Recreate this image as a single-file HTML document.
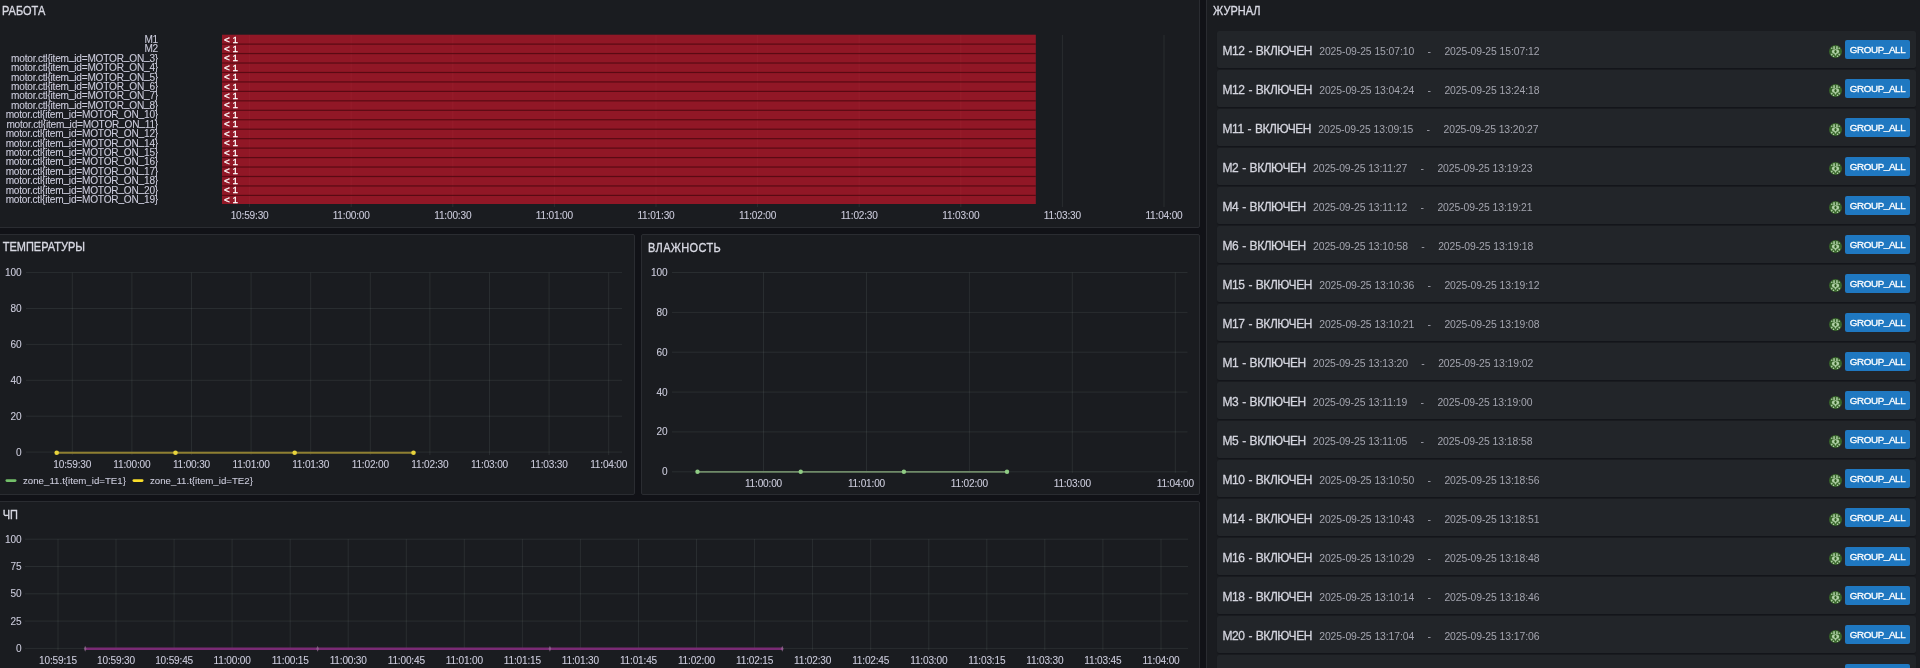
<!DOCTYPE html><html><head><meta charset="utf-8"><style>
html,body{margin:0;padding:0;}
#wrap{position:absolute;left:0;top:0;width:1920px;height:668px;will-change:transform;}
body{width:1920px;height:668px;overflow:hidden;background:#111217;font-family:"Liberation Sans", sans-serif;color:#ccccdc;position:relative;}
.pn{position:absolute;background:#1a1c20;border:1px solid #2a2c31;border-radius:2px;box-sizing:border-box;overflow:hidden;}
.t{position:absolute;white-space:nowrap;line-height:1;}
.ttl{position:absolute;font-size:11px;transform:scaleY(1.1);transform-origin:0 0;-webkit-text-stroke:0.3px #d8d9e3;line-height:1;white-space:nowrap;color:#d8d9e3;}
svg{position:absolute;left:0;top:0;overflow:visible;}
svg text{font-family:"Liberation Sans", sans-serif;fill:#ccccdc;stroke:#ccccdc;stroke-width:0.08px;}
.row{position:absolute;left:1217px;width:699px;height:37px;background:#222529;border-radius:2px;box-shadow:0 1px 1px rgba(5,6,12,0.3);}
.ln{position:absolute;left:5.5px;top:14px;display:flex;align-items:baseline;}
.nm{font-size:12px;letter-spacing:-0.45px;word-spacing:1px;color:#d4d5de;-webkit-text-stroke:0.28px #d4d5de;line-height:1;white-space:nowrap;}
.dt{margin-left:7.3px;font-size:10.4px;letter-spacing:-0.08px;color:#a3a4ae;line-height:1;white-space:nowrap;}
.tag{position:absolute;left:628px;top:9px;width:65px;height:19px;background:#1f78c1;border-radius:2px;color:#fff;font-size:9.8px;letter-spacing:-0.38px;line-height:20.5px;-webkit-text-stroke:0.3px #fff;text-align:center;}
.av{position:absolute;left:611.8px;top:13.7px;width:13px;height:13px;border-radius:50%;background:#37642a;overflow:hidden;}
</style></head><body><div id="wrap">

<div class="pn" style="left:-3px;top:-3px;width:1203px;height:231px"></div>
<div class="pn" style="left:-3px;top:234px;width:638px;height:261px"></div>
<div class="pn" style="left:641px;top:234px;width:559px;height:261px"></div>
<div class="pn" style="left:-3px;top:501px;width:1203px;height:200px"></div>
<div class="pn" style="left:1206px;top:-3px;width:720px;height:704px"></div>
<div class="ttl" style="left:2px;top:4.5px">РАБОТА</div>
<div class="ttl" style="left:2.7px;top:241.3px">ТЕМПЕРАТУРЫ</div>
<div class="ttl" style="left:648px;top:241.6px;letter-spacing:0.35px">ВЛАЖНОСТЬ</div>
<div class="ttl" style="left:2.7px;top:508.5px">ЧП</div>
<div class="ttl" style="left:1213px;top:4.5px">ЖУРНАЛ</div>
<svg width="1920" height="668" viewBox="0 0 1920 668"><line x1="249.6" y1="35" x2="249.6" y2="207" stroke="rgba(190,210,205,0.095)" stroke-width="1"/><line x1="351.2" y1="35" x2="351.2" y2="207" stroke="rgba(190,210,205,0.095)" stroke-width="1"/><line x1="452.8" y1="35" x2="452.8" y2="207" stroke="rgba(190,210,205,0.095)" stroke-width="1"/><line x1="554.4" y1="35" x2="554.4" y2="207" stroke="rgba(190,210,205,0.095)" stroke-width="1"/><line x1="656.0" y1="35" x2="656.0" y2="207" stroke="rgba(190,210,205,0.095)" stroke-width="1"/><line x1="757.6" y1="35" x2="757.6" y2="207" stroke="rgba(190,210,205,0.095)" stroke-width="1"/><line x1="859.2" y1="35" x2="859.2" y2="207" stroke="rgba(190,210,205,0.095)" stroke-width="1"/><line x1="960.8" y1="35" x2="960.8" y2="207" stroke="rgba(190,210,205,0.095)" stroke-width="1"/><line x1="1062.4" y1="35" x2="1062.4" y2="207" stroke="rgba(190,210,205,0.095)" stroke-width="1"/><line x1="1164.0" y1="35" x2="1164.0" y2="207" stroke="rgba(190,210,205,0.095)" stroke-width="1"/><rect x="222" y="34.7" width="813.8" height="169.3" fill="rgba(196,22,42,0.70)"/><rect x="222" y="43.50" width="813.8" height="1.2" fill="rgba(80,8,16,0.85)"/><rect x="222" y="52.96" width="813.8" height="1.2" fill="rgba(80,8,16,0.85)"/><rect x="222" y="62.41" width="813.8" height="1.2" fill="rgba(80,8,16,0.85)"/><rect x="222" y="71.87" width="813.8" height="1.2" fill="rgba(80,8,16,0.85)"/><rect x="222" y="81.33" width="813.8" height="1.2" fill="rgba(80,8,16,0.85)"/><rect x="222" y="90.78" width="813.8" height="1.2" fill="rgba(80,8,16,0.85)"/><rect x="222" y="100.24" width="813.8" height="1.2" fill="rgba(80,8,16,0.85)"/><rect x="222" y="109.69" width="813.8" height="1.2" fill="rgba(80,8,16,0.85)"/><rect x="222" y="119.15" width="813.8" height="1.2" fill="rgba(80,8,16,0.85)"/><rect x="222" y="128.61" width="813.8" height="1.2" fill="rgba(80,8,16,0.85)"/><rect x="222" y="138.06" width="813.8" height="1.2" fill="rgba(80,8,16,0.85)"/><rect x="222" y="147.52" width="813.8" height="1.2" fill="rgba(80,8,16,0.85)"/><rect x="222" y="156.98" width="813.8" height="1.2" fill="rgba(80,8,16,0.85)"/><rect x="222" y="166.43" width="813.8" height="1.2" fill="rgba(80,8,16,0.85)"/><rect x="222" y="175.89" width="813.8" height="1.2" fill="rgba(80,8,16,0.85)"/><rect x="222" y="185.34" width="813.8" height="1.2" fill="rgba(80,8,16,0.85)"/><rect x="222" y="194.80" width="813.8" height="1.2" fill="rgba(80,8,16,0.85)"/><text x="158" y="42.80" font-size="10.1" letter-spacing="-0.2" text-anchor="end">M1</text><text x="224" y="42.50" font-size="9.8" style="fill:#fff;stroke:#fff;stroke-width:0.3px">&lt; 1</text><text x="158" y="52.23" font-size="10.1" letter-spacing="-0.2" text-anchor="end">M2</text><text x="224" y="51.93" font-size="9.8" style="fill:#fff;stroke:#fff;stroke-width:0.3px">&lt; 1</text><text x="158" y="61.66" font-size="10.1" letter-spacing="-0.2" text-anchor="end">motor.ctl&#123;item<tspan dy="-1.3">_</tspan><tspan dy="1.3">id=MOTOR</tspan><tspan dy="-1.3">_</tspan><tspan dy="1.3">ON</tspan><tspan dy="-1.3">_</tspan><tspan dy="1.3">3&#125;</tspan></text><text x="224" y="61.36" font-size="9.8" style="fill:#fff;stroke:#fff;stroke-width:0.3px">&lt; 1</text><text x="158" y="71.08" font-size="10.1" letter-spacing="-0.2" text-anchor="end">motor.ctl&#123;item<tspan dy="-1.3">_</tspan><tspan dy="1.3">id=MOTOR</tspan><tspan dy="-1.3">_</tspan><tspan dy="1.3">ON</tspan><tspan dy="-1.3">_</tspan><tspan dy="1.3">4&#125;</tspan></text><text x="224" y="70.78" font-size="9.8" style="fill:#fff;stroke:#fff;stroke-width:0.3px">&lt; 1</text><text x="158" y="80.51" font-size="10.1" letter-spacing="-0.2" text-anchor="end">motor.ctl&#123;item<tspan dy="-1.3">_</tspan><tspan dy="1.3">id=MOTOR</tspan><tspan dy="-1.3">_</tspan><tspan dy="1.3">ON</tspan><tspan dy="-1.3">_</tspan><tspan dy="1.3">5&#125;</tspan></text><text x="224" y="80.21" font-size="9.8" style="fill:#fff;stroke:#fff;stroke-width:0.3px">&lt; 1</text><text x="158" y="89.94" font-size="10.1" letter-spacing="-0.2" text-anchor="end">motor.ctl&#123;item<tspan dy="-1.3">_</tspan><tspan dy="1.3">id=MOTOR</tspan><tspan dy="-1.3">_</tspan><tspan dy="1.3">ON</tspan><tspan dy="-1.3">_</tspan><tspan dy="1.3">6&#125;</tspan></text><text x="224" y="89.64" font-size="9.8" style="fill:#fff;stroke:#fff;stroke-width:0.3px">&lt; 1</text><text x="158" y="99.37" font-size="10.1" letter-spacing="-0.2" text-anchor="end">motor.ctl&#123;item<tspan dy="-1.3">_</tspan><tspan dy="1.3">id=MOTOR</tspan><tspan dy="-1.3">_</tspan><tspan dy="1.3">ON</tspan><tspan dy="-1.3">_</tspan><tspan dy="1.3">7&#125;</tspan></text><text x="224" y="99.07" font-size="9.8" style="fill:#fff;stroke:#fff;stroke-width:0.3px">&lt; 1</text><text x="158" y="108.79" font-size="10.1" letter-spacing="-0.2" text-anchor="end">motor.ctl&#123;item<tspan dy="-1.3">_</tspan><tspan dy="1.3">id=MOTOR</tspan><tspan dy="-1.3">_</tspan><tspan dy="1.3">ON</tspan><tspan dy="-1.3">_</tspan><tspan dy="1.3">8&#125;</tspan></text><text x="224" y="108.49" font-size="9.8" style="fill:#fff;stroke:#fff;stroke-width:0.3px">&lt; 1</text><text x="158" y="118.22" font-size="10.1" letter-spacing="-0.2" text-anchor="end">motor.ctl&#123;item<tspan dy="-1.3">_</tspan><tspan dy="1.3">id=MOTOR</tspan><tspan dy="-1.3">_</tspan><tspan dy="1.3">ON</tspan><tspan dy="-1.3">_</tspan><tspan dy="1.3">10&#125;</tspan></text><text x="224" y="117.92" font-size="9.8" style="fill:#fff;stroke:#fff;stroke-width:0.3px">&lt; 1</text><text x="158" y="127.65" font-size="10.1" letter-spacing="-0.2" text-anchor="end">motor.ctl&#123;item<tspan dy="-1.3">_</tspan><tspan dy="1.3">id=MOTOR</tspan><tspan dy="-1.3">_</tspan><tspan dy="1.3">ON</tspan><tspan dy="-1.3">_</tspan><tspan dy="1.3">11&#125;</tspan></text><text x="224" y="127.35" font-size="9.8" style="fill:#fff;stroke:#fff;stroke-width:0.3px">&lt; 1</text><text x="158" y="137.08" font-size="10.1" letter-spacing="-0.2" text-anchor="end">motor.ctl&#123;item<tspan dy="-1.3">_</tspan><tspan dy="1.3">id=MOTOR</tspan><tspan dy="-1.3">_</tspan><tspan dy="1.3">ON</tspan><tspan dy="-1.3">_</tspan><tspan dy="1.3">12&#125;</tspan></text><text x="224" y="136.78" font-size="9.8" style="fill:#fff;stroke:#fff;stroke-width:0.3px">&lt; 1</text><text x="158" y="146.51" font-size="10.1" letter-spacing="-0.2" text-anchor="end">motor.ctl&#123;item<tspan dy="-1.3">_</tspan><tspan dy="1.3">id=MOTOR</tspan><tspan dy="-1.3">_</tspan><tspan dy="1.3">ON</tspan><tspan dy="-1.3">_</tspan><tspan dy="1.3">14&#125;</tspan></text><text x="224" y="146.21" font-size="9.8" style="fill:#fff;stroke:#fff;stroke-width:0.3px">&lt; 1</text><text x="158" y="155.93" font-size="10.1" letter-spacing="-0.2" text-anchor="end">motor.ctl&#123;item<tspan dy="-1.3">_</tspan><tspan dy="1.3">id=MOTOR</tspan><tspan dy="-1.3">_</tspan><tspan dy="1.3">ON</tspan><tspan dy="-1.3">_</tspan><tspan dy="1.3">15&#125;</tspan></text><text x="224" y="155.63" font-size="9.8" style="fill:#fff;stroke:#fff;stroke-width:0.3px">&lt; 1</text><text x="158" y="165.36" font-size="10.1" letter-spacing="-0.2" text-anchor="end">motor.ctl&#123;item<tspan dy="-1.3">_</tspan><tspan dy="1.3">id=MOTOR</tspan><tspan dy="-1.3">_</tspan><tspan dy="1.3">ON</tspan><tspan dy="-1.3">_</tspan><tspan dy="1.3">16&#125;</tspan></text><text x="224" y="165.06" font-size="9.8" style="fill:#fff;stroke:#fff;stroke-width:0.3px">&lt; 1</text><text x="158" y="174.79" font-size="10.1" letter-spacing="-0.2" text-anchor="end">motor.ctl&#123;item<tspan dy="-1.3">_</tspan><tspan dy="1.3">id=MOTOR</tspan><tspan dy="-1.3">_</tspan><tspan dy="1.3">ON</tspan><tspan dy="-1.3">_</tspan><tspan dy="1.3">17&#125;</tspan></text><text x="224" y="174.49" font-size="9.8" style="fill:#fff;stroke:#fff;stroke-width:0.3px">&lt; 1</text><text x="158" y="184.22" font-size="10.1" letter-spacing="-0.2" text-anchor="end">motor.ctl&#123;item<tspan dy="-1.3">_</tspan><tspan dy="1.3">id=MOTOR</tspan><tspan dy="-1.3">_</tspan><tspan dy="1.3">ON</tspan><tspan dy="-1.3">_</tspan><tspan dy="1.3">18&#125;</tspan></text><text x="224" y="183.92" font-size="9.8" style="fill:#fff;stroke:#fff;stroke-width:0.3px">&lt; 1</text><text x="158" y="193.64" font-size="10.1" letter-spacing="-0.2" text-anchor="end">motor.ctl&#123;item<tspan dy="-1.3">_</tspan><tspan dy="1.3">id=MOTOR</tspan><tspan dy="-1.3">_</tspan><tspan dy="1.3">ON</tspan><tspan dy="-1.3">_</tspan><tspan dy="1.3">20&#125;</tspan></text><text x="224" y="193.34" font-size="9.8" style="fill:#fff;stroke:#fff;stroke-width:0.3px">&lt; 1</text><text x="158" y="203.07" font-size="10.1" letter-spacing="-0.2" text-anchor="end">motor.ctl&#123;item<tspan dy="-1.3">_</tspan><tspan dy="1.3">id=MOTOR</tspan><tspan dy="-1.3">_</tspan><tspan dy="1.3">ON</tspan><tspan dy="-1.3">_</tspan><tspan dy="1.3">19&#125;</tspan></text><text x="224" y="202.77" font-size="9.8" style="fill:#fff;stroke:#fff;stroke-width:0.3px">&lt; 1</text><text x="249.6" y="219.3" font-size="10.1" letter-spacing="-0.18" text-anchor="middle">10:59:30</text><text x="351.2" y="219.3" font-size="10.1" letter-spacing="-0.18" text-anchor="middle">11:00:00</text><text x="452.8" y="219.3" font-size="10.1" letter-spacing="-0.18" text-anchor="middle">11:00:30</text><text x="554.4" y="219.3" font-size="10.1" letter-spacing="-0.18" text-anchor="middle">11:01:00</text><text x="656.0" y="219.3" font-size="10.1" letter-spacing="-0.18" text-anchor="middle">11:01:30</text><text x="757.6" y="219.3" font-size="10.1" letter-spacing="-0.18" text-anchor="middle">11:02:00</text><text x="859.2" y="219.3" font-size="10.1" letter-spacing="-0.18" text-anchor="middle">11:02:30</text><text x="960.8" y="219.3" font-size="10.1" letter-spacing="-0.18" text-anchor="middle">11:03:00</text><text x="1062.4" y="219.3" font-size="10.1" letter-spacing="-0.18" text-anchor="middle">11:03:30</text><text x="1164.0" y="219.3" font-size="10.1" letter-spacing="-0.18" text-anchor="middle">11:04:00</text><line x1="26" y1="272.6" x2="622" y2="272.6" stroke="rgba(190,210,205,0.095)"/><text x="21.5" y="276.1" font-size="10.1" letter-spacing="-0.1" text-anchor="end">100</text><line x1="26" y1="308.5" x2="622" y2="308.5" stroke="rgba(190,210,205,0.095)"/><text x="21.5" y="312.0" font-size="10.1" letter-spacing="-0.1" text-anchor="end">80</text><line x1="26" y1="344.4" x2="622" y2="344.4" stroke="rgba(190,210,205,0.095)"/><text x="21.5" y="347.9" font-size="10.1" letter-spacing="-0.1" text-anchor="end">60</text><line x1="26" y1="380.3" x2="622" y2="380.3" stroke="rgba(190,210,205,0.095)"/><text x="21.5" y="383.8" font-size="10.1" letter-spacing="-0.1" text-anchor="end">40</text><line x1="26" y1="416.2" x2="622" y2="416.2" stroke="rgba(190,210,205,0.095)"/><text x="21.5" y="419.7" font-size="10.1" letter-spacing="-0.1" text-anchor="end">20</text><line x1="26" y1="452.1" x2="622" y2="452.1" stroke="rgba(190,210,205,0.095)"/><text x="21.5" y="455.6" font-size="10.1" letter-spacing="-0.1" text-anchor="end">0</text><line x1="72.3" y1="272.6" x2="72.3" y2="455.1" stroke="rgba(190,210,205,0.095)"/><text x="72.3" y="468" font-size="10.1" letter-spacing="-0.18" text-anchor="middle">10:59:30</text><line x1="131.9" y1="272.6" x2="131.9" y2="455.1" stroke="rgba(190,210,205,0.095)"/><text x="131.9" y="468" font-size="10.1" letter-spacing="-0.18" text-anchor="middle">11:00:00</text><line x1="191.5" y1="272.6" x2="191.5" y2="455.1" stroke="rgba(190,210,205,0.095)"/><text x="191.5" y="468" font-size="10.1" letter-spacing="-0.18" text-anchor="middle">11:00:30</text><line x1="251.1" y1="272.6" x2="251.1" y2="455.1" stroke="rgba(190,210,205,0.095)"/><text x="251.1" y="468" font-size="10.1" letter-spacing="-0.18" text-anchor="middle">11:01:00</text><line x1="310.7" y1="272.6" x2="310.7" y2="455.1" stroke="rgba(190,210,205,0.095)"/><text x="310.7" y="468" font-size="10.1" letter-spacing="-0.18" text-anchor="middle">11:01:30</text><line x1="370.3" y1="272.6" x2="370.3" y2="455.1" stroke="rgba(190,210,205,0.095)"/><text x="370.3" y="468" font-size="10.1" letter-spacing="-0.18" text-anchor="middle">11:02:00</text><line x1="429.9" y1="272.6" x2="429.9" y2="455.1" stroke="rgba(190,210,205,0.095)"/><text x="429.9" y="468" font-size="10.1" letter-spacing="-0.18" text-anchor="middle">11:02:30</text><line x1="489.5" y1="272.6" x2="489.5" y2="455.1" stroke="rgba(190,210,205,0.095)"/><text x="489.5" y="468" font-size="10.1" letter-spacing="-0.18" text-anchor="middle">11:03:00</text><line x1="549.1" y1="272.6" x2="549.1" y2="455.1" stroke="rgba(190,210,205,0.095)"/><text x="549.1" y="468" font-size="10.1" letter-spacing="-0.18" text-anchor="middle">11:03:30</text><line x1="608.7" y1="272.6" x2="608.7" y2="455.1" stroke="rgba(190,210,205,0.095)"/><text x="608.7" y="468" font-size="10.1" letter-spacing="-0.18" text-anchor="middle">11:04:00</text><line x1="56.7" y1="452.7" x2="413.5" y2="452.7" stroke="#8f7f32" stroke-width="2"/><circle cx="56.7" cy="452.7" r="2.3" fill="#e8d33c"/><circle cx="175.5" cy="452.7" r="2.3" fill="#e8d33c"/><circle cx="294.7" cy="452.7" r="2.3" fill="#e8d33c"/><circle cx="413.5" cy="452.7" r="2.3" fill="#e8d33c"/><rect x="5.5" y="479.3" width="11" height="2.6" rx="1.3" fill="#73bf69"/><text x="23" y="484" font-size="9.7">zone_11.t&#123;item_id=TE1&#125;</text><rect x="132.5" y="479.3" width="11" height="2.6" rx="1.3" fill="#fade2a"/><text x="150" y="484" font-size="9.7">zone_11.t&#123;item_id=TE2&#125;</text><line x1="672" y1="272.5" x2="1187.5" y2="272.5" stroke="rgba(190,210,205,0.095)"/><text x="667.5" y="276.0" font-size="10.1" letter-spacing="-0.1" text-anchor="end">100</text><line x1="672" y1="312.4" x2="1187.5" y2="312.4" stroke="rgba(190,210,205,0.095)"/><text x="667.5" y="315.9" font-size="10.1" letter-spacing="-0.1" text-anchor="end">80</text><line x1="672" y1="352.2" x2="1187.5" y2="352.2" stroke="rgba(190,210,205,0.095)"/><text x="667.5" y="355.7" font-size="10.1" letter-spacing="-0.1" text-anchor="end">60</text><line x1="672" y1="392.1" x2="1187.5" y2="392.1" stroke="rgba(190,210,205,0.095)"/><text x="667.5" y="395.6" font-size="10.1" letter-spacing="-0.1" text-anchor="end">40</text><line x1="672" y1="431.9" x2="1187.5" y2="431.9" stroke="rgba(190,210,205,0.095)"/><text x="667.5" y="435.4" font-size="10.1" letter-spacing="-0.1" text-anchor="end">20</text><line x1="672" y1="471.8" x2="1187.5" y2="471.8" stroke="rgba(190,210,205,0.095)"/><text x="667.5" y="475.2" font-size="10.1" letter-spacing="-0.1" text-anchor="end">0</text><line x1="763.5" y1="272.5" x2="763.5" y2="472.8" stroke="rgba(190,210,205,0.095)"/><text x="763.5" y="486.8" font-size="10.1" letter-spacing="-0.18" text-anchor="middle">11:00:00</text><line x1="866.5" y1="272.5" x2="866.5" y2="472.8" stroke="rgba(190,210,205,0.095)"/><text x="866.5" y="486.8" font-size="10.1" letter-spacing="-0.18" text-anchor="middle">11:01:00</text><line x1="969.4" y1="272.5" x2="969.4" y2="472.8" stroke="rgba(190,210,205,0.095)"/><text x="969.4" y="486.8" font-size="10.1" letter-spacing="-0.18" text-anchor="middle">11:02:00</text><line x1="1072.3" y1="272.5" x2="1072.3" y2="472.8" stroke="rgba(190,210,205,0.095)"/><text x="1072.3" y="486.8" font-size="10.1" letter-spacing="-0.18" text-anchor="middle">11:03:00</text><line x1="1175.3" y1="272.5" x2="1175.3" y2="472.8" stroke="rgba(190,210,205,0.095)"/><text x="1175.3" y="486.8" font-size="10.1" letter-spacing="-0.18" text-anchor="middle">11:04:00</text><line x1="697.5" y1="471.8" x2="1007" y2="471.8" stroke="#6f8a68" stroke-width="1.7"/><circle cx="697.5" cy="471.8" r="2.2" fill="#8fcc84"/><circle cx="800.7" cy="471.8" r="2.2" fill="#8fcc84"/><circle cx="903.9" cy="471.8" r="2.2" fill="#8fcc84"/><circle cx="1007" cy="471.8" r="2.2" fill="#8fcc84"/><line x1="25" y1="539.2" x2="1188" y2="539.2" stroke="rgba(190,210,205,0.095)"/><text x="21.5" y="542.7" font-size="10.1" letter-spacing="-0.1" text-anchor="end">100</text><line x1="25" y1="566.5" x2="1188" y2="566.5" stroke="rgba(190,210,205,0.095)"/><text x="21.5" y="570.0" font-size="10.1" letter-spacing="-0.1" text-anchor="end">75</text><line x1="25" y1="593.8" x2="1188" y2="593.8" stroke="rgba(190,210,205,0.095)"/><text x="21.5" y="597.3" font-size="10.1" letter-spacing="-0.1" text-anchor="end">50</text><line x1="25" y1="621.1" x2="1188" y2="621.1" stroke="rgba(190,210,205,0.095)"/><text x="21.5" y="624.6" font-size="10.1" letter-spacing="-0.1" text-anchor="end">25</text><line x1="25" y1="648.4" x2="1188" y2="648.4" stroke="rgba(190,210,205,0.095)"/><text x="21.5" y="651.9" font-size="10.1" letter-spacing="-0.1" text-anchor="end">0</text><line x1="58.0" y1="539.2" x2="58.0" y2="650.4" stroke="rgba(190,210,205,0.095)"/><text x="58.0" y="663.5" font-size="10.1" letter-spacing="-0.18" text-anchor="middle">10:59:15</text><line x1="116.0" y1="539.2" x2="116.0" y2="650.4" stroke="rgba(190,210,205,0.095)"/><text x="116.0" y="663.5" font-size="10.1" letter-spacing="-0.18" text-anchor="middle">10:59:30</text><line x1="174.1" y1="539.2" x2="174.1" y2="650.4" stroke="rgba(190,210,205,0.095)"/><text x="174.1" y="663.5" font-size="10.1" letter-spacing="-0.18" text-anchor="middle">10:59:45</text><line x1="232.1" y1="539.2" x2="232.1" y2="650.4" stroke="rgba(190,210,205,0.095)"/><text x="232.1" y="663.5" font-size="10.1" letter-spacing="-0.18" text-anchor="middle">11:00:00</text><line x1="290.2" y1="539.2" x2="290.2" y2="650.4" stroke="rgba(190,210,205,0.095)"/><text x="290.2" y="663.5" font-size="10.1" letter-spacing="-0.18" text-anchor="middle">11:00:15</text><line x1="348.2" y1="539.2" x2="348.2" y2="650.4" stroke="rgba(190,210,205,0.095)"/><text x="348.2" y="663.5" font-size="10.1" letter-spacing="-0.18" text-anchor="middle">11:00:30</text><line x1="406.3" y1="539.2" x2="406.3" y2="650.4" stroke="rgba(190,210,205,0.095)"/><text x="406.3" y="663.5" font-size="10.1" letter-spacing="-0.18" text-anchor="middle">11:00:45</text><line x1="464.3" y1="539.2" x2="464.3" y2="650.4" stroke="rgba(190,210,205,0.095)"/><text x="464.3" y="663.5" font-size="10.1" letter-spacing="-0.18" text-anchor="middle">11:01:00</text><line x1="522.4" y1="539.2" x2="522.4" y2="650.4" stroke="rgba(190,210,205,0.095)"/><text x="522.4" y="663.5" font-size="10.1" letter-spacing="-0.18" text-anchor="middle">11:01:15</text><line x1="580.4" y1="539.2" x2="580.4" y2="650.4" stroke="rgba(190,210,205,0.095)"/><text x="580.4" y="663.5" font-size="10.1" letter-spacing="-0.18" text-anchor="middle">11:01:30</text><line x1="638.5" y1="539.2" x2="638.5" y2="650.4" stroke="rgba(190,210,205,0.095)"/><text x="638.5" y="663.5" font-size="10.1" letter-spacing="-0.18" text-anchor="middle">11:01:45</text><line x1="696.5" y1="539.2" x2="696.5" y2="650.4" stroke="rgba(190,210,205,0.095)"/><text x="696.5" y="663.5" font-size="10.1" letter-spacing="-0.18" text-anchor="middle">11:02:00</text><line x1="754.6" y1="539.2" x2="754.6" y2="650.4" stroke="rgba(190,210,205,0.095)"/><text x="754.6" y="663.5" font-size="10.1" letter-spacing="-0.18" text-anchor="middle">11:02:15</text><line x1="812.6" y1="539.2" x2="812.6" y2="650.4" stroke="rgba(190,210,205,0.095)"/><text x="812.6" y="663.5" font-size="10.1" letter-spacing="-0.18" text-anchor="middle">11:02:30</text><line x1="870.7" y1="539.2" x2="870.7" y2="650.4" stroke="rgba(190,210,205,0.095)"/><text x="870.7" y="663.5" font-size="10.1" letter-spacing="-0.18" text-anchor="middle">11:02:45</text><line x1="928.8" y1="539.2" x2="928.8" y2="650.4" stroke="rgba(190,210,205,0.095)"/><text x="928.8" y="663.5" font-size="10.1" letter-spacing="-0.18" text-anchor="middle">11:03:00</text><line x1="986.8" y1="539.2" x2="986.8" y2="650.4" stroke="rgba(190,210,205,0.095)"/><text x="986.8" y="663.5" font-size="10.1" letter-spacing="-0.18" text-anchor="middle">11:03:15</text><line x1="1044.8" y1="539.2" x2="1044.8" y2="650.4" stroke="rgba(190,210,205,0.095)"/><text x="1044.8" y="663.5" font-size="10.1" letter-spacing="-0.18" text-anchor="middle">11:03:30</text><line x1="1102.9" y1="539.2" x2="1102.9" y2="650.4" stroke="rgba(190,210,205,0.095)"/><text x="1102.9" y="663.5" font-size="10.1" letter-spacing="-0.18" text-anchor="middle">11:03:45</text><line x1="1161.0" y1="539.2" x2="1161.0" y2="650.4" stroke="rgba(190,210,205,0.095)"/><text x="1161.0" y="663.5" font-size="10.1" letter-spacing="-0.18" text-anchor="middle">11:04:00</text><line x1="85" y1="648.8" x2="783" y2="648.8" stroke="#7a2a74" stroke-width="2.4"/><polygon points="85.2,645.8 86.5,648.8 85.2,651.8 83.9,648.8" fill="rgba(150,110,150,0.75)"/><polygon points="317.6,645.8 318.9,648.8 317.6,651.8 316.3,648.8" fill="rgba(150,110,150,0.75)"/><polygon points="549.9,645.8 551.2,648.8 549.9,651.8 548.6,648.8" fill="rgba(150,110,150,0.75)"/><polygon points="782.3,645.8 783.6,648.8 782.3,651.8 781.0,648.8" fill="rgba(150,110,150,0.75)"/></svg>
<div class="row" style="top:31px"><div class="ln"><div class="nm">M12 - ВКЛЮЧЕН</div><div class="dt">2025-09-25 15:07:10</div><div class="dt" style="margin-left:13.3px">-</div><div class="dt" style="margin-left:13.5px">2025-09-25 15:07:12</div></div><div class="av"><svg width="13" height="13" viewBox="0 0 13 13" style="position:absolute;left:0;top:0"><g fill="#b0d0a6"><circle cx="2.8" cy="3.3" r="0.8"/><circle cx="10.2" cy="3.3" r="0.8"/><rect x="4.3" y="1.2" width="1.5" height="3"/><rect x="7.2" y="1.2" width="1.5" height="3"/><ellipse cx="6.5" cy="6.6" rx="3.6" ry="2.3"/><polygon points="1.5,8.8 4,8.8 2.75,11"/><polygon points="5.25,8.8 7.75,8.8 6.5,11"/><polygon points="9,8.8 11.5,8.8 10.25,11"/><rect x="3.8" y="10.6" width="1.4" height="1.4"/><rect x="7.8" y="10.6" width="1.4" height="1.4"/><ellipse cx="6.5" cy="6.6" rx="1.1" ry="1.7" fill="#2c5a1c"/></g></svg></div><div class="tag">GROUP<span style="position:relative;top:-1px">_</span>ALL</div></div>
<div class="row" style="top:70px"><div class="ln"><div class="nm">M12 - ВКЛЮЧЕН</div><div class="dt">2025-09-25 13:04:24</div><div class="dt" style="margin-left:13.3px">-</div><div class="dt" style="margin-left:13.5px">2025-09-25 13:24:18</div></div><div class="av"><svg width="13" height="13" viewBox="0 0 13 13" style="position:absolute;left:0;top:0"><g fill="#b0d0a6"><circle cx="2.8" cy="3.3" r="0.8"/><circle cx="10.2" cy="3.3" r="0.8"/><rect x="4.3" y="1.2" width="1.5" height="3"/><rect x="7.2" y="1.2" width="1.5" height="3"/><ellipse cx="6.5" cy="6.6" rx="3.6" ry="2.3"/><polygon points="1.5,8.8 4,8.8 2.75,11"/><polygon points="5.25,8.8 7.75,8.8 6.5,11"/><polygon points="9,8.8 11.5,8.8 10.25,11"/><rect x="3.8" y="10.6" width="1.4" height="1.4"/><rect x="7.8" y="10.6" width="1.4" height="1.4"/><ellipse cx="6.5" cy="6.6" rx="1.1" ry="1.7" fill="#2c5a1c"/></g></svg></div><div class="tag">GROUP<span style="position:relative;top:-1px">_</span>ALL</div></div>
<div class="row" style="top:109px"><div class="ln"><div class="nm">M11 - ВКЛЮЧЕН</div><div class="dt">2025-09-25 13:09:15</div><div class="dt" style="margin-left:13.3px">-</div><div class="dt" style="margin-left:13.5px">2025-09-25 13:20:27</div></div><div class="av"><svg width="13" height="13" viewBox="0 0 13 13" style="position:absolute;left:0;top:0"><g fill="#b0d0a6"><circle cx="2.8" cy="3.3" r="0.8"/><circle cx="10.2" cy="3.3" r="0.8"/><rect x="4.3" y="1.2" width="1.5" height="3"/><rect x="7.2" y="1.2" width="1.5" height="3"/><ellipse cx="6.5" cy="6.6" rx="3.6" ry="2.3"/><polygon points="1.5,8.8 4,8.8 2.75,11"/><polygon points="5.25,8.8 7.75,8.8 6.5,11"/><polygon points="9,8.8 11.5,8.8 10.25,11"/><rect x="3.8" y="10.6" width="1.4" height="1.4"/><rect x="7.8" y="10.6" width="1.4" height="1.4"/><ellipse cx="6.5" cy="6.6" rx="1.1" ry="1.7" fill="#2c5a1c"/></g></svg></div><div class="tag">GROUP<span style="position:relative;top:-1px">_</span>ALL</div></div>
<div class="row" style="top:148px"><div class="ln"><div class="nm">M2 - ВКЛЮЧЕН</div><div class="dt">2025-09-25 13:11:27</div><div class="dt" style="margin-left:13.3px">-</div><div class="dt" style="margin-left:13.5px">2025-09-25 13:19:23</div></div><div class="av"><svg width="13" height="13" viewBox="0 0 13 13" style="position:absolute;left:0;top:0"><g fill="#b0d0a6"><circle cx="2.8" cy="3.3" r="0.8"/><circle cx="10.2" cy="3.3" r="0.8"/><rect x="4.3" y="1.2" width="1.5" height="3"/><rect x="7.2" y="1.2" width="1.5" height="3"/><ellipse cx="6.5" cy="6.6" rx="3.6" ry="2.3"/><polygon points="1.5,8.8 4,8.8 2.75,11"/><polygon points="5.25,8.8 7.75,8.8 6.5,11"/><polygon points="9,8.8 11.5,8.8 10.25,11"/><rect x="3.8" y="10.6" width="1.4" height="1.4"/><rect x="7.8" y="10.6" width="1.4" height="1.4"/><ellipse cx="6.5" cy="6.6" rx="1.1" ry="1.7" fill="#2c5a1c"/></g></svg></div><div class="tag">GROUP<span style="position:relative;top:-1px">_</span>ALL</div></div>
<div class="row" style="top:187px"><div class="ln"><div class="nm">M4 - ВКЛЮЧЕН</div><div class="dt">2025-09-25 13:11:12</div><div class="dt" style="margin-left:13.3px">-</div><div class="dt" style="margin-left:13.5px">2025-09-25 13:19:21</div></div><div class="av"><svg width="13" height="13" viewBox="0 0 13 13" style="position:absolute;left:0;top:0"><g fill="#b0d0a6"><circle cx="2.8" cy="3.3" r="0.8"/><circle cx="10.2" cy="3.3" r="0.8"/><rect x="4.3" y="1.2" width="1.5" height="3"/><rect x="7.2" y="1.2" width="1.5" height="3"/><ellipse cx="6.5" cy="6.6" rx="3.6" ry="2.3"/><polygon points="1.5,8.8 4,8.8 2.75,11"/><polygon points="5.25,8.8 7.75,8.8 6.5,11"/><polygon points="9,8.8 11.5,8.8 10.25,11"/><rect x="3.8" y="10.6" width="1.4" height="1.4"/><rect x="7.8" y="10.6" width="1.4" height="1.4"/><ellipse cx="6.5" cy="6.6" rx="1.1" ry="1.7" fill="#2c5a1c"/></g></svg></div><div class="tag">GROUP<span style="position:relative;top:-1px">_</span>ALL</div></div>
<div class="row" style="top:226px"><div class="ln"><div class="nm">M6 - ВКЛЮЧЕН</div><div class="dt">2025-09-25 13:10:58</div><div class="dt" style="margin-left:13.3px">-</div><div class="dt" style="margin-left:13.5px">2025-09-25 13:19:18</div></div><div class="av"><svg width="13" height="13" viewBox="0 0 13 13" style="position:absolute;left:0;top:0"><g fill="#b0d0a6"><circle cx="2.8" cy="3.3" r="0.8"/><circle cx="10.2" cy="3.3" r="0.8"/><rect x="4.3" y="1.2" width="1.5" height="3"/><rect x="7.2" y="1.2" width="1.5" height="3"/><ellipse cx="6.5" cy="6.6" rx="3.6" ry="2.3"/><polygon points="1.5,8.8 4,8.8 2.75,11"/><polygon points="5.25,8.8 7.75,8.8 6.5,11"/><polygon points="9,8.8 11.5,8.8 10.25,11"/><rect x="3.8" y="10.6" width="1.4" height="1.4"/><rect x="7.8" y="10.6" width="1.4" height="1.4"/><ellipse cx="6.5" cy="6.6" rx="1.1" ry="1.7" fill="#2c5a1c"/></g></svg></div><div class="tag">GROUP<span style="position:relative;top:-1px">_</span>ALL</div></div>
<div class="row" style="top:265px"><div class="ln"><div class="nm">M15 - ВКЛЮЧЕН</div><div class="dt">2025-09-25 13:10:36</div><div class="dt" style="margin-left:13.3px">-</div><div class="dt" style="margin-left:13.5px">2025-09-25 13:19:12</div></div><div class="av"><svg width="13" height="13" viewBox="0 0 13 13" style="position:absolute;left:0;top:0"><g fill="#b0d0a6"><circle cx="2.8" cy="3.3" r="0.8"/><circle cx="10.2" cy="3.3" r="0.8"/><rect x="4.3" y="1.2" width="1.5" height="3"/><rect x="7.2" y="1.2" width="1.5" height="3"/><ellipse cx="6.5" cy="6.6" rx="3.6" ry="2.3"/><polygon points="1.5,8.8 4,8.8 2.75,11"/><polygon points="5.25,8.8 7.75,8.8 6.5,11"/><polygon points="9,8.8 11.5,8.8 10.25,11"/><rect x="3.8" y="10.6" width="1.4" height="1.4"/><rect x="7.8" y="10.6" width="1.4" height="1.4"/><ellipse cx="6.5" cy="6.6" rx="1.1" ry="1.7" fill="#2c5a1c"/></g></svg></div><div class="tag">GROUP<span style="position:relative;top:-1px">_</span>ALL</div></div>
<div class="row" style="top:304px"><div class="ln"><div class="nm">M17 - ВКЛЮЧЕН</div><div class="dt">2025-09-25 13:10:21</div><div class="dt" style="margin-left:13.3px">-</div><div class="dt" style="margin-left:13.5px">2025-09-25 13:19:08</div></div><div class="av"><svg width="13" height="13" viewBox="0 0 13 13" style="position:absolute;left:0;top:0"><g fill="#b0d0a6"><circle cx="2.8" cy="3.3" r="0.8"/><circle cx="10.2" cy="3.3" r="0.8"/><rect x="4.3" y="1.2" width="1.5" height="3"/><rect x="7.2" y="1.2" width="1.5" height="3"/><ellipse cx="6.5" cy="6.6" rx="3.6" ry="2.3"/><polygon points="1.5,8.8 4,8.8 2.75,11"/><polygon points="5.25,8.8 7.75,8.8 6.5,11"/><polygon points="9,8.8 11.5,8.8 10.25,11"/><rect x="3.8" y="10.6" width="1.4" height="1.4"/><rect x="7.8" y="10.6" width="1.4" height="1.4"/><ellipse cx="6.5" cy="6.6" rx="1.1" ry="1.7" fill="#2c5a1c"/></g></svg></div><div class="tag">GROUP<span style="position:relative;top:-1px">_</span>ALL</div></div>
<div class="row" style="top:343px"><div class="ln"><div class="nm">M1 - ВКЛЮЧЕН</div><div class="dt">2025-09-25 13:13:20</div><div class="dt" style="margin-left:13.3px">-</div><div class="dt" style="margin-left:13.5px">2025-09-25 13:19:02</div></div><div class="av"><svg width="13" height="13" viewBox="0 0 13 13" style="position:absolute;left:0;top:0"><g fill="#b0d0a6"><circle cx="2.8" cy="3.3" r="0.8"/><circle cx="10.2" cy="3.3" r="0.8"/><rect x="4.3" y="1.2" width="1.5" height="3"/><rect x="7.2" y="1.2" width="1.5" height="3"/><ellipse cx="6.5" cy="6.6" rx="3.6" ry="2.3"/><polygon points="1.5,8.8 4,8.8 2.75,11"/><polygon points="5.25,8.8 7.75,8.8 6.5,11"/><polygon points="9,8.8 11.5,8.8 10.25,11"/><rect x="3.8" y="10.6" width="1.4" height="1.4"/><rect x="7.8" y="10.6" width="1.4" height="1.4"/><ellipse cx="6.5" cy="6.6" rx="1.1" ry="1.7" fill="#2c5a1c"/></g></svg></div><div class="tag">GROUP<span style="position:relative;top:-1px">_</span>ALL</div></div>
<div class="row" style="top:382px"><div class="ln"><div class="nm">M3 - ВКЛЮЧЕН</div><div class="dt">2025-09-25 13:11:19</div><div class="dt" style="margin-left:13.3px">-</div><div class="dt" style="margin-left:13.5px">2025-09-25 13:19:00</div></div><div class="av"><svg width="13" height="13" viewBox="0 0 13 13" style="position:absolute;left:0;top:0"><g fill="#b0d0a6"><circle cx="2.8" cy="3.3" r="0.8"/><circle cx="10.2" cy="3.3" r="0.8"/><rect x="4.3" y="1.2" width="1.5" height="3"/><rect x="7.2" y="1.2" width="1.5" height="3"/><ellipse cx="6.5" cy="6.6" rx="3.6" ry="2.3"/><polygon points="1.5,8.8 4,8.8 2.75,11"/><polygon points="5.25,8.8 7.75,8.8 6.5,11"/><polygon points="9,8.8 11.5,8.8 10.25,11"/><rect x="3.8" y="10.6" width="1.4" height="1.4"/><rect x="7.8" y="10.6" width="1.4" height="1.4"/><ellipse cx="6.5" cy="6.6" rx="1.1" ry="1.7" fill="#2c5a1c"/></g></svg></div><div class="tag">GROUP<span style="position:relative;top:-1px">_</span>ALL</div></div>
<div class="row" style="top:421px"><div class="ln"><div class="nm">M5 - ВКЛЮЧЕН</div><div class="dt">2025-09-25 13:11:05</div><div class="dt" style="margin-left:13.3px">-</div><div class="dt" style="margin-left:13.5px">2025-09-25 13:18:58</div></div><div class="av"><svg width="13" height="13" viewBox="0 0 13 13" style="position:absolute;left:0;top:0"><g fill="#b0d0a6"><circle cx="2.8" cy="3.3" r="0.8"/><circle cx="10.2" cy="3.3" r="0.8"/><rect x="4.3" y="1.2" width="1.5" height="3"/><rect x="7.2" y="1.2" width="1.5" height="3"/><ellipse cx="6.5" cy="6.6" rx="3.6" ry="2.3"/><polygon points="1.5,8.8 4,8.8 2.75,11"/><polygon points="5.25,8.8 7.75,8.8 6.5,11"/><polygon points="9,8.8 11.5,8.8 10.25,11"/><rect x="3.8" y="10.6" width="1.4" height="1.4"/><rect x="7.8" y="10.6" width="1.4" height="1.4"/><ellipse cx="6.5" cy="6.6" rx="1.1" ry="1.7" fill="#2c5a1c"/></g></svg></div><div class="tag">GROUP<span style="position:relative;top:-1px">_</span>ALL</div></div>
<div class="row" style="top:460px"><div class="ln"><div class="nm">M10 - ВКЛЮЧЕН</div><div class="dt">2025-09-25 13:10:50</div><div class="dt" style="margin-left:13.3px">-</div><div class="dt" style="margin-left:13.5px">2025-09-25 13:18:56</div></div><div class="av"><svg width="13" height="13" viewBox="0 0 13 13" style="position:absolute;left:0;top:0"><g fill="#b0d0a6"><circle cx="2.8" cy="3.3" r="0.8"/><circle cx="10.2" cy="3.3" r="0.8"/><rect x="4.3" y="1.2" width="1.5" height="3"/><rect x="7.2" y="1.2" width="1.5" height="3"/><ellipse cx="6.5" cy="6.6" rx="3.6" ry="2.3"/><polygon points="1.5,8.8 4,8.8 2.75,11"/><polygon points="5.25,8.8 7.75,8.8 6.5,11"/><polygon points="9,8.8 11.5,8.8 10.25,11"/><rect x="3.8" y="10.6" width="1.4" height="1.4"/><rect x="7.8" y="10.6" width="1.4" height="1.4"/><ellipse cx="6.5" cy="6.6" rx="1.1" ry="1.7" fill="#2c5a1c"/></g></svg></div><div class="tag">GROUP<span style="position:relative;top:-1px">_</span>ALL</div></div>
<div class="row" style="top:499px"><div class="ln"><div class="nm">M14 - ВКЛЮЧЕН</div><div class="dt">2025-09-25 13:10:43</div><div class="dt" style="margin-left:13.3px">-</div><div class="dt" style="margin-left:13.5px">2025-09-25 13:18:51</div></div><div class="av"><svg width="13" height="13" viewBox="0 0 13 13" style="position:absolute;left:0;top:0"><g fill="#b0d0a6"><circle cx="2.8" cy="3.3" r="0.8"/><circle cx="10.2" cy="3.3" r="0.8"/><rect x="4.3" y="1.2" width="1.5" height="3"/><rect x="7.2" y="1.2" width="1.5" height="3"/><ellipse cx="6.5" cy="6.6" rx="3.6" ry="2.3"/><polygon points="1.5,8.8 4,8.8 2.75,11"/><polygon points="5.25,8.8 7.75,8.8 6.5,11"/><polygon points="9,8.8 11.5,8.8 10.25,11"/><rect x="3.8" y="10.6" width="1.4" height="1.4"/><rect x="7.8" y="10.6" width="1.4" height="1.4"/><ellipse cx="6.5" cy="6.6" rx="1.1" ry="1.7" fill="#2c5a1c"/></g></svg></div><div class="tag">GROUP<span style="position:relative;top:-1px">_</span>ALL</div></div>
<div class="row" style="top:538px"><div class="ln"><div class="nm">M16 - ВКЛЮЧЕН</div><div class="dt">2025-09-25 13:10:29</div><div class="dt" style="margin-left:13.3px">-</div><div class="dt" style="margin-left:13.5px">2025-09-25 13:18:48</div></div><div class="av"><svg width="13" height="13" viewBox="0 0 13 13" style="position:absolute;left:0;top:0"><g fill="#b0d0a6"><circle cx="2.8" cy="3.3" r="0.8"/><circle cx="10.2" cy="3.3" r="0.8"/><rect x="4.3" y="1.2" width="1.5" height="3"/><rect x="7.2" y="1.2" width="1.5" height="3"/><ellipse cx="6.5" cy="6.6" rx="3.6" ry="2.3"/><polygon points="1.5,8.8 4,8.8 2.75,11"/><polygon points="5.25,8.8 7.75,8.8 6.5,11"/><polygon points="9,8.8 11.5,8.8 10.25,11"/><rect x="3.8" y="10.6" width="1.4" height="1.4"/><rect x="7.8" y="10.6" width="1.4" height="1.4"/><ellipse cx="6.5" cy="6.6" rx="1.1" ry="1.7" fill="#2c5a1c"/></g></svg></div><div class="tag">GROUP<span style="position:relative;top:-1px">_</span>ALL</div></div>
<div class="row" style="top:577px"><div class="ln"><div class="nm">M18 - ВКЛЮЧЕН</div><div class="dt">2025-09-25 13:10:14</div><div class="dt" style="margin-left:13.3px">-</div><div class="dt" style="margin-left:13.5px">2025-09-25 13:18:46</div></div><div class="av"><svg width="13" height="13" viewBox="0 0 13 13" style="position:absolute;left:0;top:0"><g fill="#b0d0a6"><circle cx="2.8" cy="3.3" r="0.8"/><circle cx="10.2" cy="3.3" r="0.8"/><rect x="4.3" y="1.2" width="1.5" height="3"/><rect x="7.2" y="1.2" width="1.5" height="3"/><ellipse cx="6.5" cy="6.6" rx="3.6" ry="2.3"/><polygon points="1.5,8.8 4,8.8 2.75,11"/><polygon points="5.25,8.8 7.75,8.8 6.5,11"/><polygon points="9,8.8 11.5,8.8 10.25,11"/><rect x="3.8" y="10.6" width="1.4" height="1.4"/><rect x="7.8" y="10.6" width="1.4" height="1.4"/><ellipse cx="6.5" cy="6.6" rx="1.1" ry="1.7" fill="#2c5a1c"/></g></svg></div><div class="tag">GROUP<span style="position:relative;top:-1px">_</span>ALL</div></div>
<div class="row" style="top:616px"><div class="ln"><div class="nm">M20 - ВКЛЮЧЕН</div><div class="dt">2025-09-25 13:17:04</div><div class="dt" style="margin-left:13.3px">-</div><div class="dt" style="margin-left:13.5px">2025-09-25 13:17:06</div></div><div class="av"><svg width="13" height="13" viewBox="0 0 13 13" style="position:absolute;left:0;top:0"><g fill="#b0d0a6"><circle cx="2.8" cy="3.3" r="0.8"/><circle cx="10.2" cy="3.3" r="0.8"/><rect x="4.3" y="1.2" width="1.5" height="3"/><rect x="7.2" y="1.2" width="1.5" height="3"/><ellipse cx="6.5" cy="6.6" rx="3.6" ry="2.3"/><polygon points="1.5,8.8 4,8.8 2.75,11"/><polygon points="5.25,8.8 7.75,8.8 6.5,11"/><polygon points="9,8.8 11.5,8.8 10.25,11"/><rect x="3.8" y="10.6" width="1.4" height="1.4"/><rect x="7.8" y="10.6" width="1.4" height="1.4"/><ellipse cx="6.5" cy="6.6" rx="1.1" ry="1.7" fill="#2c5a1c"/></g></svg></div><div class="tag">GROUP<span style="position:relative;top:-1px">_</span>ALL</div></div>
<div class="row" style="top:655px"><div class="ln"><div class="nm">M7 - ВКЛЮЧЕН</div><div class="dt">2025-09-25 13:10:00</div><div class="dt" style="margin-left:13.3px">-</div><div class="dt" style="margin-left:13.5px">2025-09-25 13:18:40</div></div><div class="av"><svg width="13" height="13" viewBox="0 0 13 13" style="position:absolute;left:0;top:0"><g fill="#b0d0a6"><circle cx="2.8" cy="3.3" r="0.8"/><circle cx="10.2" cy="3.3" r="0.8"/><rect x="4.3" y="1.2" width="1.5" height="3"/><rect x="7.2" y="1.2" width="1.5" height="3"/><ellipse cx="6.5" cy="6.6" rx="3.6" ry="2.3"/><polygon points="1.5,8.8 4,8.8 2.75,11"/><polygon points="5.25,8.8 7.75,8.8 6.5,11"/><polygon points="9,8.8 11.5,8.8 10.25,11"/><rect x="3.8" y="10.6" width="1.4" height="1.4"/><rect x="7.8" y="10.6" width="1.4" height="1.4"/><ellipse cx="6.5" cy="6.6" rx="1.1" ry="1.7" fill="#2c5a1c"/></g></svg></div><div class="tag">GROUP<span style="position:relative;top:-1px">_</span>ALL</div></div>
</div></body></html>
